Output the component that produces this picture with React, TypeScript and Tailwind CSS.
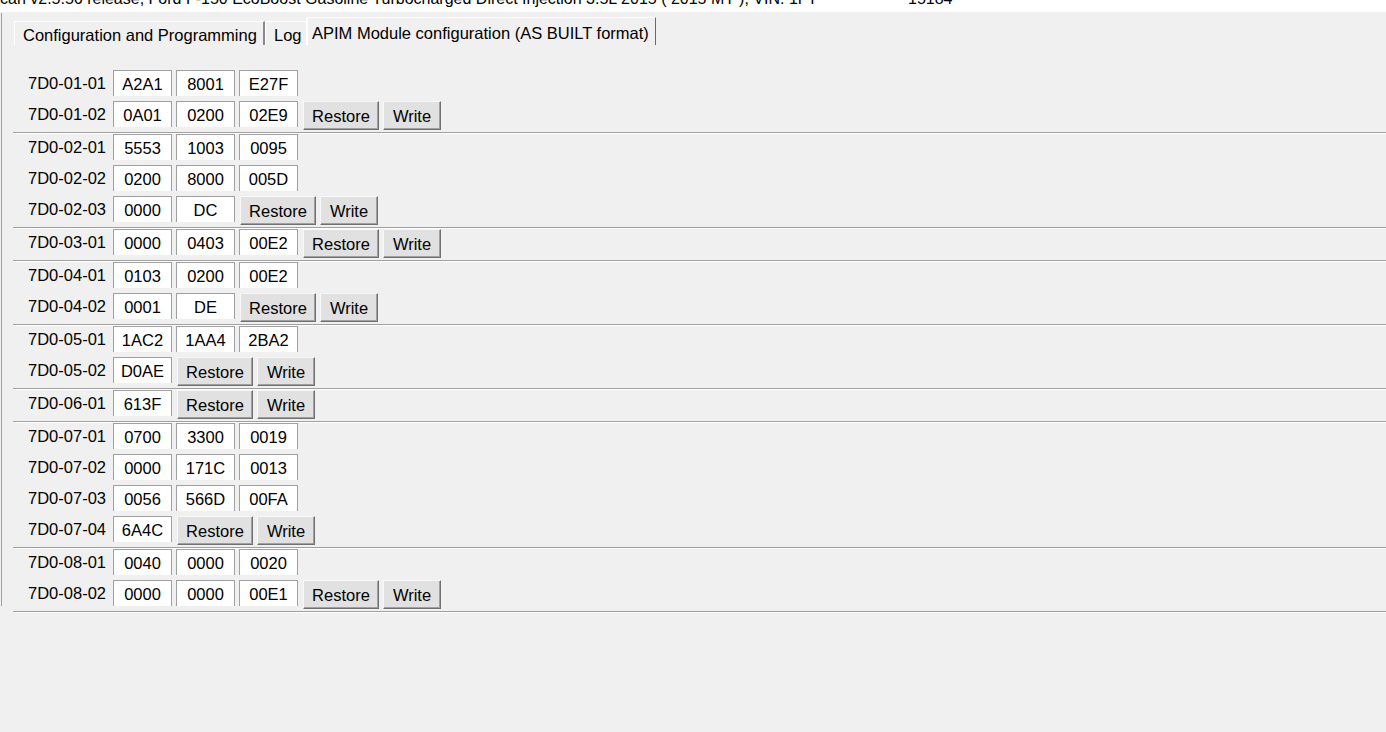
import React from "react";

type Row = { id: string; vals: string[]; btn?: boolean };

const groups: Row[][] = [
  [
    { id: "7D0-01-01", vals: ["A2A1", "8001", "E27F"] },
    { id: "7D0-01-02", vals: ["0A01", "0200", "02E9"], btn: true },
  ],
  [
    { id: "7D0-02-01", vals: ["5553", "1003", "0095"] },
    { id: "7D0-02-02", vals: ["0200", "8000", "005D"] },
    { id: "7D0-02-03", vals: ["0000", "DC"], btn: true },
  ],
  [{ id: "7D0-03-01", vals: ["0000", "0403", "00E2"], btn: true }],
  [
    { id: "7D0-04-01", vals: ["0103", "0200", "00E2"] },
    { id: "7D0-04-02", vals: ["0001", "DE"], btn: true },
  ],
  [
    { id: "7D0-05-01", vals: ["1AC2", "1AA4", "2BA2"] },
    { id: "7D0-05-02", vals: ["D0AE"], btn: true },
  ],
  [{ id: "7D0-06-01", vals: ["613F"], btn: true }],
  [
    { id: "7D0-07-01", vals: ["0700", "3300", "0019"] },
    { id: "7D0-07-02", vals: ["0000", "171C", "0013"] },
    { id: "7D0-07-03", vals: ["0056", "566D", "00FA"] },
    { id: "7D0-07-04", vals: ["6A4C"], btn: true },
  ],
  [
    { id: "7D0-08-01", vals: ["0040", "0000", "0020"] },
    { id: "7D0-08-02", vals: ["0000", "0000", "00E1"], btn: true },
  ],
];

function Btn({ label, w, ml }: { label: string; w: string; ml: string }) {
  return (
    <div
      className={`${w} ${ml} h-[29px] pt-[2px] flex items-center justify-center bg-[#e1e1e1] border border-t-[#f8f8f8] border-l-[#f8f8f8] border-r-[#707070] border-b-[#707070] shadow-[inset_-1px_-1px_0_#a0a0a0]`}
    >
      {label}
    </div>
  );
}

function RowView({ row }: { row: Row }) {
  return (
    <div className="flex items-start h-[31px]">
      <div className="w-[93px] h-[26px] pt-[1px] flex items-center justify-end">{row.id}</div>
      <div className="ml-[7px] flex gap-[4px]">
        {row.vals.map((v, i) => (
          <div
            key={i}
            className="w-[59px] h-[26px] pt-[1px] bg-white border-t border-l border-r border-[#a0a0a0] flex items-center justify-center"
          >
            {v}
          </div>
        ))}
      </div>
      {row.btn && (
        <>
          <Btn label="Restore" w="w-[76px]" ml="ml-[5px]" />
          <Btn label="Write" w="w-[58px]" ml="ml-[4px]" />
        </>
      )}
    </div>
  );
}

export default function App() {
  return (
    <div className="w-[1386px] h-[732px] overflow-hidden bg-[#f0f0f0] text-black text-[16.5px] leading-none font-['Liberation_Sans',Arial,sans-serif]">
      {/* title bar remnant */}
      <div className="h-[12px] bg-white overflow-hidden">
        <div className="flex -mt-[11px] h-[20px] items-center whitespace-nowrap text-[16px] text-[#000]">
          <span className="w-[908px] shrink-0 overflow-hidden">
            can v2.5.56 release, Ford F-150 EcoBoost Gasoline Turbocharged Direct Injection 3.5L 2015 ( 2015 MY ), VIN: 1FT
          </span>
          <span>15184</span>
        </div>
      </div>

      <div className="flex">
        <div className="ml-[1px] mt-[1px] w-px h-[593px] bg-[#a0a0a0]" />
        <div className="ml-[11px] flex-1 flex flex-col">
          {/* tabs */}
          <div className="h-[33px] flex items-end">
            <div className="ml-[1px] w-[251px] h-[24px] flex items-center pl-[8px] pt-[4px] border-t border-l border-white border-r-2 border-r-[#8a8a8a] whitespace-nowrap">
              Configuration and Programming
            </div>
            <div className="w-[41px] h-[24px] flex items-center pl-[8px] pt-[4px] border-t border-l border-white whitespace-nowrap">
              Log
            </div>
            <div className="w-[350px] h-[28px] flex items-center pl-[4px] pt-[3px] border-t border-l-2 border-white border-r border-r-[#696969] whitespace-nowrap">
              APIM Module configuration (AS BUILT format)
            </div>
          </div>

          {/* content */}
          <div className="mt-[25px] flex flex-col">
            {groups.map((g, gi) => (
              <div key={gi} className="flex flex-col">
                {g.map((r) => (
                  <RowView key={r.id} row={r} />
                ))}
                <div className="h-[2px] border-t border-[#a0a0a0] border-b border-b-white" />
              </div>
            ))}
          </div>
        </div>
      </div>
    </div>
  );
}
